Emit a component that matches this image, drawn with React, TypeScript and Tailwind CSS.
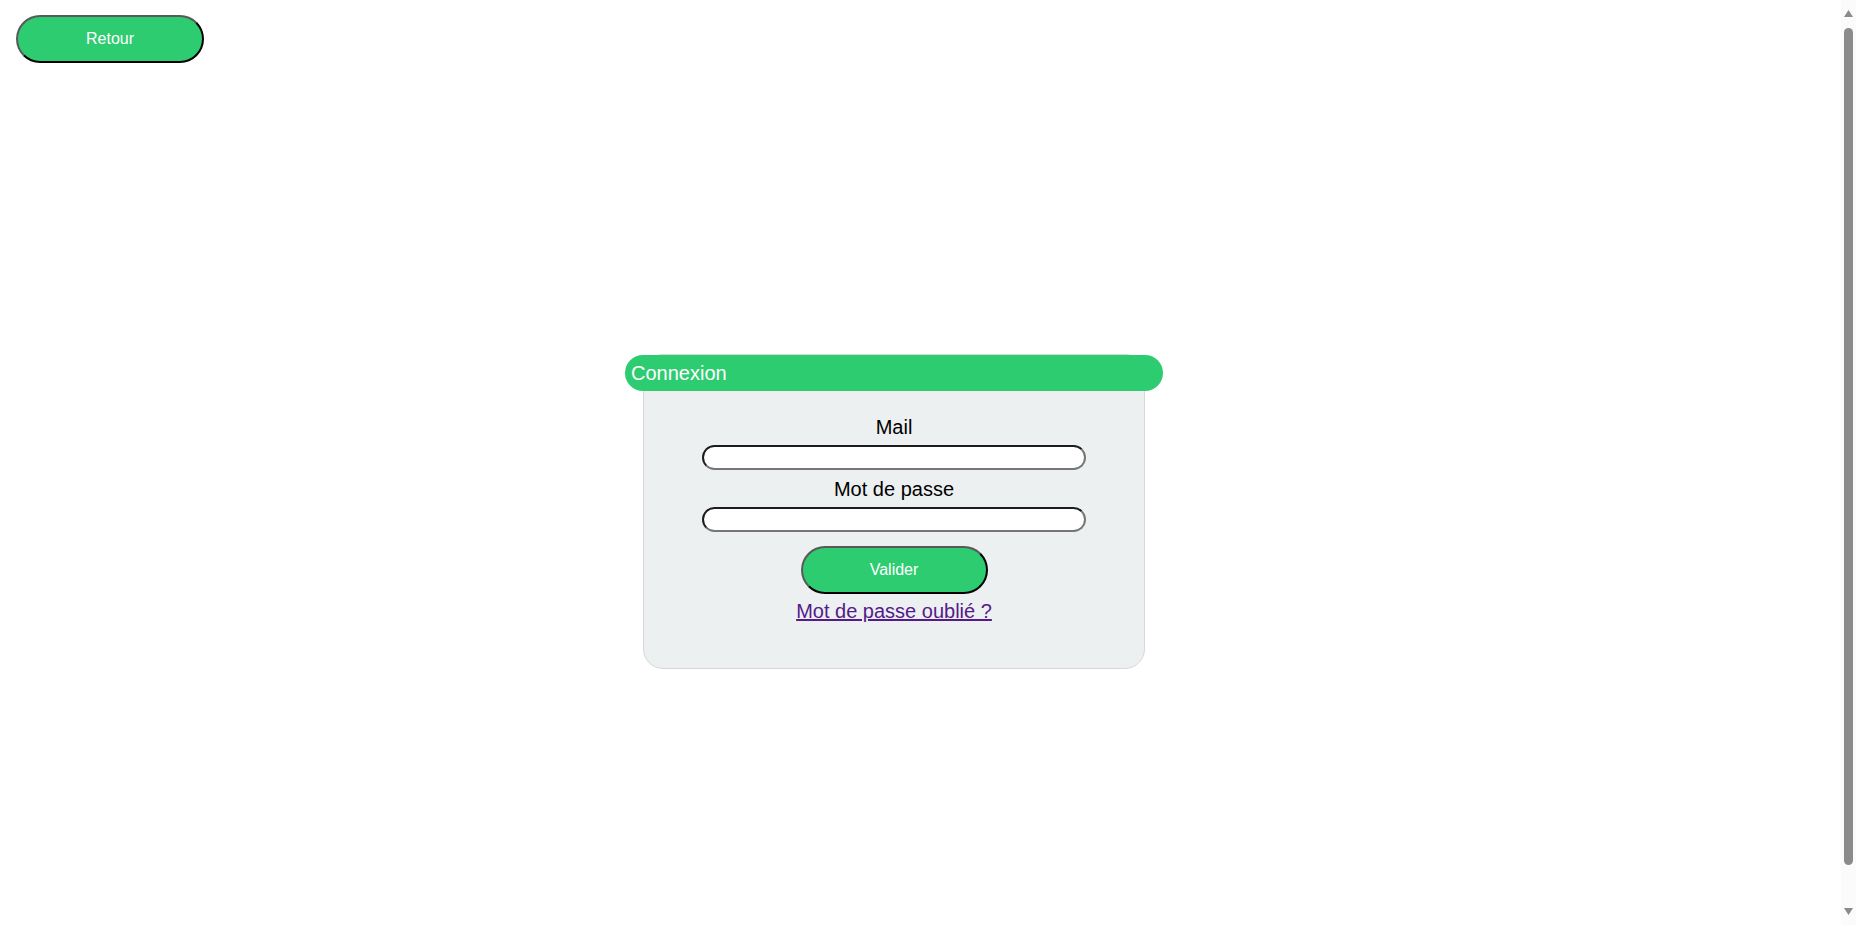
import React from 'react';

const font = { fontFamily: '"Liberation Sans", Arial, sans-serif' };

function PillButton({ label, className }: { label: string; className: string }) {
  return (
    <button
      type="button"
      className={`h-[48px] rounded-full bg-[#2ecc71] text-[16px] text-white border-2 border-t-[#595959] border-l-[#595959] border-b-black border-r-black ${className}`}
    >
      {label}
    </button>
  );
}

function Field({ label, type }: { label: string; type: string }) {
  return (
    <>
      <label className="leading-[23px]">{label}</label>
      <input
        type={type}
        className="mt-[6px] w-[384px] h-[25px] rounded-full bg-white border-2 border-t-[#1c1c1c] border-l-[#1c1c1c] border-b-[#767676] border-r-[#767676] outline-none"
      />
    </>
  );
}

// fake browser scrollbar seen in the screenshot
function Scrollbar() {
  return (
    <div className="w-[15px] h-[925px] bg-[#fbfbfb] flex flex-col items-center">
      <svg width="9" height="7" viewBox="0 0 9 7" className="mt-[10px]">
        <path d="M4.5 0L9 7H0z" fill="#8a8a8a" />
      </svg>
      <div className="mt-[11px] w-[9px] h-[837px] rounded-full bg-[#8b8b8b]" />
      <svg width="9" height="7" viewBox="0 0 9 7" className="mt-[43px]">
        <path d="M0 0h9L4.5 7z" fill="#8a8a8a" />
      </svg>
    </div>
  );
}

export default function App() {
  return (
    <div className="h-[925px] overflow-hidden bg-white text-black flex" style={font}>
      <div className="flex-1 flex flex-col">
        <div className="pt-[15px] pl-[16px]">
          <PillButton label="Retour" className="w-[188px]" />
        </div>

        {/* Login box */}
        <div className="mt-[291px] ml-[643px] w-[502px] bg-[#ecf0f1] border border-[#d6d9da] rounded-[20px] flex flex-col items-center pb-[45px] text-[20px]">
          <div className="-mx-[19px] self-stretch h-[36px] rounded-full bg-[#2ecc71] text-white leading-[36px] pl-[6px]">
            Connexion
          </div>
          <div className="mt-[25px] flex flex-col items-center">
            <Field label="Mail" type="text" />
            <div className="h-[8px]" />
            <Field label="Mot de passe" type="password" />
          </div>
          <PillButton label="Valider" className="mt-[14px] w-[187px]" />
          <a href="#" className="mt-[6px] leading-[23px] text-[#551a8b] underline">
            Mot de passe oublié ?
          </a>
        </div>
      </div>
      <Scrollbar />
    </div>
  );
}
